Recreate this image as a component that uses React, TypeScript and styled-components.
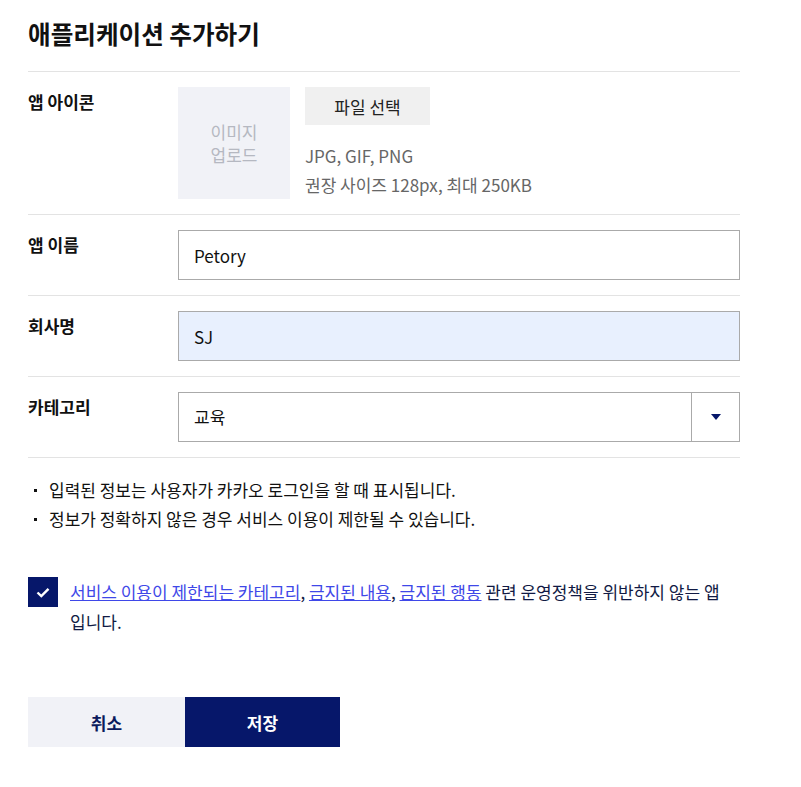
import styled, { createGlobalStyle } from 'styled-components';

const GlobalStyle = createGlobalStyle`
  body {
    margin: 0;
    background: #fff;
    font-family: 'Noto Sans CJK KR', 'Noto Sans', sans-serif;
    color: #111;
  }
`;

const Page = styled.div`
  width: 712px;
  padding: 16px 0 40px 28px;
`;

const Title = styled.h1`
  margin: 0;
  height: 55px;
  font-size: 24.6px;
  line-height: 34px;
  font-weight: 700;
  color: #111;
  border-bottom: 1px solid #e3e3e3;
`;

const Row = styled.div`
  display: grid;
  grid-template-columns: 150px 1fr;
  padding: 15px 0;
  border-bottom: 1px solid #e3e3e3;
`;

const Label = styled.div`
  font-size: 17px;
  font-weight: 700;
  line-height: 30px;
  color: #111;
`;

const Upload = styled.div`
  display: flex;
  gap: 15px;
`;

const IconBox = styled.div`
  width: 112px;
  height: 112px;
  background: #f1f2f7;
  color: #b5b8c1;
  font-size: 17px;
  line-height: 23px;
  display: flex;
  align-items: center;
  justify-content: center;
  text-align: center;
`;

const FileInfo = styled.div`
  display: flex;
  flex-direction: column;
  align-items: flex-start;
`;

const FileButton = styled.button`
  width: 125px;
  height: 38px;
  border: 0;
  background: #f0f0f0;
  font-family: inherit;
  font-size: 17px;
  color: #222;
  padding: 0;
`;

const Hint = styled.p`
  margin: 16px 0 0;
  font-size: 17px;
  line-height: 29px;
  color: #666;
`;

const TextInput = styled.input<{ $filled?: boolean }>`
  box-sizing: border-box;
  width: 100%;
  height: 50px;
  border: 1px solid #aaa;
  background: ${({ $filled }) => ($filled ? '#e8f0fe' : '#fff')};
  padding: 0 15px;
  font-family: inherit;
  font-size: 17px;
  color: #111;
  outline: none;
`;

const Select = styled.div`
  box-sizing: border-box;
  height: 50px;
  border: 1px solid #aaa;
  display: grid;
  grid-template-columns: 1fr 48px;
`;

const SelectValue = styled.span`
  padding: 0 15px;
  font-size: 17px;
  line-height: 48px;
  color: #111;
`;

const SelectArrow = styled.span`
  border-left: 1px solid #aaa;
  display: flex;
  align-items: center;
  justify-content: center;
`;

const Notes = styled.ul`
  list-style: none;
  margin: 0;
  padding: 17px 0 0;
  font-size: 17px;
  line-height: 29px;
  color: #111;

  li {
    position: relative;
    padding-left: 21px;
  }

  li::before {
    content: '';
    position: absolute;
    left: 6px;
    top: 14px;
    width: 3px;
    height: 3px;
    background: #111;
  }
`;

const Agree = styled.label`
  display: flex;
  gap: 12px;
  margin-top: 44px;
  font-size: 17px;
  line-height: 30px;
  color: #111a44;
`;

const CheckBox = styled.span`
  flex: none;
  width: 30px;
  height: 30px;
  background: #06176a;
  display: flex;
  align-items: center;
  justify-content: center;
`;

const AgreeText = styled.span`
  width: 670px;
  word-break: keep-all;

  a {
    color: #3f48e8;
    text-decoration: underline;
  }
`;

const Actions = styled.div`
  display: flex;
  margin-top: 60px;
`;

const ActionButton = styled.button<{ $primary?: boolean }>`
  width: ${({ $primary }) => ($primary ? '155px' : '157px')};
  height: 50px;
  border: 0;
  padding: 0;
  font-family: inherit;
  font-size: 17px;
  font-weight: 700;
  background: ${({ $primary }) => ($primary ? '#06176a' : '#f1f2f7')};
  color: ${({ $primary }) => ($primary ? '#fff' : '#0b1a5c')};
`;

export default function App() {
  return (
    <Page>
      <GlobalStyle />
      <Title>애플리케이션 추가하기</Title>

      <Row>
        <Label>앱 아이콘</Label>
        <Upload>
          <IconBox>
            이미지
            <br />
            업로드
          </IconBox>
          <FileInfo>
            <FileButton>파일 선택</FileButton>
            <Hint>
              JPG, GIF, PNG
              <br />
              권장 사이즈 128px, 최대 250KB
            </Hint>
          </FileInfo>
        </Upload>
      </Row>

      <Row>
        <Label>앱 이름</Label>
        <TextInput defaultValue="Petory" />
      </Row>

      <Row>
        <Label>회사명</Label>
        <TextInput $filled defaultValue="SJ" />
      </Row>

      <Row>
        <Label>카테고리</Label>
        <Select>
          <SelectValue>교육</SelectValue>
          <SelectArrow>
            <svg width="10" height="6" viewBox="0 0 10 6">
              <path d="M0 0h10L5 6z" fill="#06176a" />
            </svg>
          </SelectArrow>
        </Select>
      </Row>

      <Notes>
        <li>입력된 정보는 사용자가 카카오 로그인을 할 때 표시됩니다.</li>
        <li>정보가 정확하지 않은 경우 서비스 이용이 제한될 수 있습니다.</li>
      </Notes>

      <Agree>
        <CheckBox>
          <svg width="14" height="11" viewBox="0 0 14 11">
            <path d="M1.5 5.5l3.8 3.6L12.5 1.8" fill="none" stroke="#fff" strokeWidth="2.4" />
          </svg>
        </CheckBox>
        <AgreeText>
          <a>서비스 이용이 제한되는 카테고리</a>, <a>금지된 내용</a>, <a>금지된 행동</a> 관련
          운영정책을 위반하지 않는 앱 입니다.
        </AgreeText>
      </Agree>

      <Actions>
        <ActionButton>취소</ActionButton>
        <ActionButton $primary>저장</ActionButton>
      </Actions>
    </Page>
  );
}
